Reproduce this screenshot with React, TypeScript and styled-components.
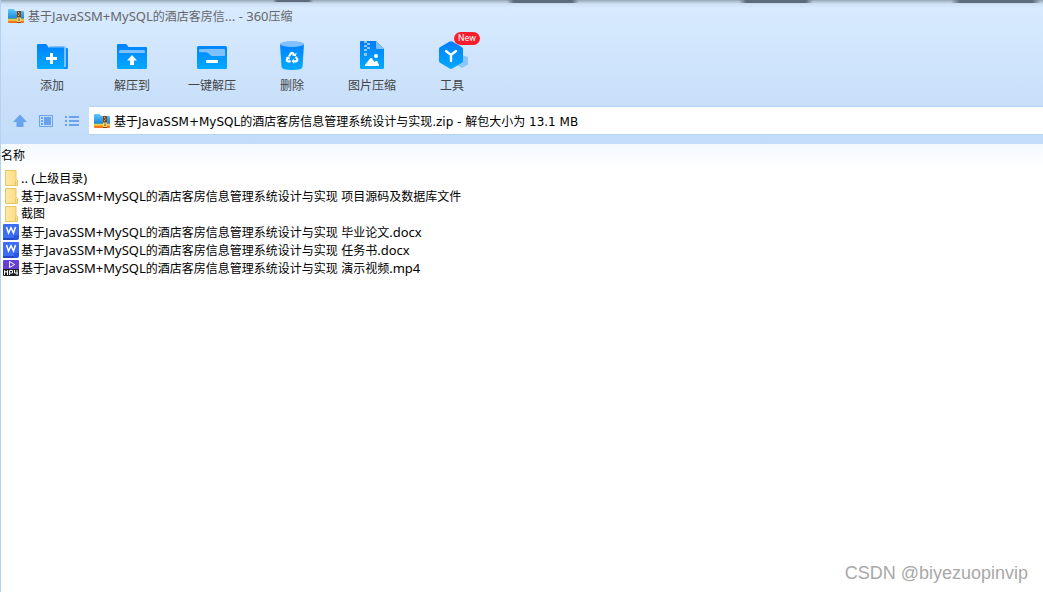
import React from "react";
import styled, { createGlobalStyle } from "styled-components";

const GlobalStyle = createGlobalStyle`
  * { box-sizing: border-box; }
  body {
    margin: 0;
    background: #fff;
    color: #000;
    font: 12px/18px "Noto Sans", "Noto Sans CJK SC", sans-serif;
  }
  button, input { font: inherit; color: inherit; }
  button { border: 0; padding: 0; background: none; cursor: pointer; }
`;

const Window = styled.div`
  position: relative;
  min-height: 100vh;
  border-left: 1px solid #b5d2f3;
`;

const shadowPatch = "linear-gradient(90deg, transparent, #5c6c7e 10%, #5c6c7e 90%, transparent)";

const Header = styled.header`
  background:
    ${shadowPatch} 272px 0 / 40px 2px no-repeat,
    ${shadowPatch} 506px 0 / 72px 3px no-repeat,
    ${shadowPatch} 738px 0 / 74px 3px no-repeat,
    ${shadowPatch} 950px 0 / 90px 3px no-repeat,
    linear-gradient(#95a5b6 0, #b4c6d8 2px, #cde1f5 4px, transparent 8px),
    linear-gradient(#d7eaff 10px, #c9e0fa 100px, #c2dcf9 144px);
`;

const TitleBar = styled.div`
  display: flex;
  align-items: center;
  gap: 4px;
  height: 32px;
  padding-left: 7px;
`;

const Title = styled.h1`
  margin: 0;
  font-size: 12px;
  font-weight: 400;
  color: #666;
  white-space: pre;
`;

const Latin = styled.span`
  font-size: 13px;
`;

const Toolbar = styled.div`
  display: flex;
  padding: 8px 0 6px 11px;
`;

const Tool = styled.button`
  position: relative;
  display: flex;
  flex-direction: column;
  align-items: center;
  gap: 5px;
  width: 80px;
  color: #444;
`;

const Badge = styled.span`
  position: absolute;
  top: -8px;
  left: 42px;
  width: 26px;
  border-radius: 7px;
  background: #fa1e2d;
  color: #fff;
  font: 9px/13px Roboto, sans-serif;
`;

const AddressRow = styled.div`
  display: flex;
  align-items: center;
  padding: 5px 0 9px 6px;
`;

const NavButton = styled.button`
  display: grid;
  place-items: center;
  width: 26px;
  height: 28px;
`;

const Address = styled.label`
  display: flex;
  flex: 1;
  align-items: center;
  gap: 4px;
  height: 29px;
  margin-left: 4px;
  padding-left: 5px;
  background: #fff;
  border: solid #b5d3f3;
  border-width: 1px 0;
`;

const AddressInput = styled.input`
  flex: 1;
  min-width: 0;
  border: 0;
  padding: 2px 0 0;
  outline: 0;
  background: none;
  font-family: "DejaVu Sans", "Noto Sans CJK SC", sans-serif;
`;

const FileTable = styled.table`
  width: 100%;
  border-collapse: collapse;
`;

const HeadCell = styled.th`
  height: 25px;
  padding: 0 0 1px;
  background: linear-gradient(#f3f9ff, #fff);
  font-weight: 400;
  text-align: left;
`;

const FileCell = styled.td`
  padding: 0;
`;

const FileName = styled.div`
  display: flex;
  align-items: center;
  gap: 2px;
  height: 18px;
  padding-left: 2px;
  white-space: pre;
`;

const Watermark = styled.p`
  position: absolute;
  right: 15px;
  bottom: 8px;
  margin: 0;
  color: #a8a8a8;
  font: 18px/22px "Liberation Sans", sans-serif;
`;

/* Latin runs are set one size larger than the Chinese text beside them. */
const Mixed = ({ text }: { text: string }) => (
  <span>
    {text.split(/([\x20-\x7e]+)/).map((run, i) => (i % 2 ? <Latin key={i}>{run}</Latin> : run))}
  </span>
);

const ArchiveIcon = () => (
  <svg width="16" height="16" viewBox="0 0 16 16" aria-hidden="true">
    <defs>
      <linearGradient id="archive" x1="0" y1="0" x2="0" y2="1">
        <stop stopColor="#5cc8fa" />
        <stop offset="1" stopColor="#1a86e0" />
      </linearGradient>
    </defs>
    <path d="M0 2q0-1 1-1h4.500L7 3h8q1 0 1 1v7H0z" fill="url(#archive)" />
    <path d="M0 10.500h16v1H0z" fill="#7cc243" />
    <path d="M0 11.500h16V13H0z" fill="#ffb833" />
    <path d="M0 13h16v1q0 1-1 1H1q-1 0-1-1z" fill="#f2761c" />
    <path d="M9 3h4v12H9z" fill="#80441a" />
    <path d="M10 4h1v1h-1zm1 1.500h1v1h-1zM10 7h1v1h-1z" fill="#f2b44a" />
    <path d="M9 9.500h4V14H9z" fill="#ffd36b" />
    <path d="M10.500 10.500h1V13h-1z" fill="#7a3f10" />
  </svg>
);

const FolderIcon = () => (
  <svg width="16" height="16" viewBox="0 0 16 16" aria-hidden="true">
    <defs>
      <linearGradient id="folder">
        <stop stopColor="#ffe9a6" />
        <stop offset="1" stopColor="#fcdc82" />
      </linearGradient>
    </defs>
    <path d="M2.500.5h10.500v9l1.500 1v5h-12z" fill="url(#folder)" stroke="#e8c566" />
    <path d="M12.500 15.500v-5" stroke="#e8c566" />
  </svg>
);

const WordIcon = () => (
  <svg width="16" height="16" viewBox="0 0 16 16" aria-hidden="true">
    <path d="M1 0h14q1 0 1 1v10l-5 5H1q-1 0-1-1V1q0-1 1-1z" fill="#3b6ef5" />
    <path d="M0 14h12l-1.500 2H1q-1 0-1-1z" fill="#2348c2" />
    <path d="M11 16v-4q0-1 1-1h4v3q0 2-2 2z" fill="#2a55dd" />
    <path d="M3.500 3 5.500 9 8 3.800 10.500 9l2-6" fill="none" stroke="#fff" strokeWidth="1.500" />
  </svg>
);

const VideoIcon = () => (
  <svg width="16" height="16" viewBox="0 0 16 16" aria-hidden="true">
    <path d="M0 1q0-1 1-1h14q1 0 1 1v8H0z" fill="#6440d8" />
    <path d="M0 9h16v6q0 1-1 1H1q-1 0-1-1z" fill="#1f1f24" />
    <path d="M6.500 1.500v6L11.500 4.500z" fill="none" stroke="#fff" />
    <path
      d="M1.500 15v-4.500l1.500 2 1.500-2V15M6.500 15v-4.500h3v2.500h-3M11.500 10v3h3.500m-1-3v5"
      fill="none"
      stroke="#fff"
    />
  </svg>
);

const ToolIcon = ({ children }: { children: React.ReactNode }) => (
  <svg width="32" height="32" viewBox="0 0 32 32" aria-hidden="true">
    <defs>
      <linearGradient id="blue" x1="0" y1="2" x2="0" y2="29" gradientUnits="userSpaceOnUse">
        <stop stopColor="#007dff" />
        <stop offset="1" stopColor="#00aaff" />
      </linearGradient>
    </defs>
    {children}
  </svg>
);

const tools = [
  {
    label: "添加",
    icon: (
      <>
        <path d="M26 8h5q1 0 1 1v18.500q0 1.500-1.500 1.500H26z" fill="#0a8cff" />
        <path d="M13 6h15q2 0 2 2v19h-2V8H14z" fill="#7fc0ff" />
        <path d="M1 5q0-1 1-1h7.500q1 0 1.500 1l1.500 2.500H28V29H2.500Q1 29 1 27.500z" fill="url(#blue)" />
        <path d="M14 13h3v4h4v3h-4v4h-3v-4h-4v-3h4z" fill="#fff" />
      </>
    ),
  },
  {
    label: "解压到",
    icon: (
      <>
        <path
          d="M1 5q0-1 1-1h7.500q1 0 1.500 1l1.500 2H30q1 0 1 1v19.500q0 1.500-1.500 1.500h-27Q1 29 1 27.500z"
          fill="url(#blue)"
        />
        <path d="M3 11.500Q3 10 4.500 10h23q1.500 0 1.500 1.500V13H3z" fill="#7fc0ff" />
        <path d="m16 15 5 5.500h-3V25h-4v-4.500h-3z" fill="#fff" />
      </>
    ),
  },
  {
    label: "一键解压",
    icon: (
      <>
        <rect x="1" y="6" width="30" height="23" rx="1.500" fill="url(#blue)" />
        <path d="M3 10q0-1 1-1h24q1 0 1 1v6H16q-1 0-2-1l-2-2q-.8-.8-2-.8H3z" fill="#7fc0ff" />
        <rect x="10" y="20" width="12" height="3" rx="1" fill="#fff" />
      </>
    ),
  },
  {
    label: "删除",
    icon: (
      <>
        <path d="M4 4h24l-1.500 23q-.2 3-10.500 3T5.500 27z" fill="url(#blue)" />
        <ellipse cx="16" cy="4" rx="12" ry="3" fill="#7fc0ff" />
        <g fill="none" stroke="#fff" strokeWidth="2.200">
          <path d="m13.200 16.300 1.700-2.800q1.100-1.400 2.200 0l.8 1.400" />
          <path d="m19.800 16.800 1.400 2.500q.7 1.900-1.300 2.100h-2.700" />
          <path d="M14.700 21.400h-2.500q-2-.2-1.300-2.100l.9-1.500" />
        </g>
        <path d="m16 15.500 3.700.8 1-3.500zM18 18.500v5.300l-2.500-2.500zM9.700 17.200l3.600-.9.600 3.600z" fill="#fff" />
      </>
    ),
  },
  {
    label: "图片压缩",
    icon: (
      <>
        <path d="M4 2q0-1 1-1h15l8 8v18.500q0 1.500-1.500 1.500h-21Q4 29 4 27.500z" fill="url(#blue)" />
        <path d="M20 1l8 8h-7q-1 0-1-1z" fill="#7fc0ff" />
        <path d="M8 1h3v2H8zm3 2h3v2h-3zM8 5h3v2H8zm3 2h3v2h-3zM8 9h3v2H8zm0 4h3v3H8z" fill="#8cc6ff" />
        <circle cx="20" cy="16" r="2" fill="#fff" />
        <path d="M9 26v-1l5-6.500q1-1 2 0l2.500 3.500 1.300-1q.8-.5 1.500.3L23 25v1z" fill="#fff" />
      </>
    ),
  },
  {
    label: "工具",
    badge: "New",
    icon: (
      <>
        <path d="m25 15 7 2v7.500L26 28l-5-3z" fill="#8cc4fb" />
        <path
          d="M13.700 1.600q1.300-.8 2.600 0l9.700 5.600q1 .6 1 1.800v12q0 1.200-1 1.800l-9.700 5.600q-1.300.8-2.600 0L4 22.800q-1-.6-1-1.800V9q0-1.200 1-1.800z"
          fill="url(#blue)"
        />
        <path d="m10 11 5 4 5-4m-5 4v6" fill="none" stroke="#fff" strokeWidth="2.400" strokeLinecap="round" />
      </>
    ),
  },
];

const navButtons = [
  { label: "向上", icon: <path d="m7 .5 7 7.500h-3.500v5h-7V8H0z" fill="#69a2ee" /> },
  {
    label: "预览",
    icon: (
      <>
        <path d="M.5 1.500h13v11H.5z" fill="none" stroke="#69a2ee" />
        <path d="M2 3h2v2H2zm0 3h2v2H2zm0 3h2v2H2zM5 3h7v8H5z" fill="#69a2ee" />
      </>
    ),
  },
  {
    label: "列表",
    icon: <path d="M0 2h2v2H0zm4 0h10v2H4zM0 6h2v2H0zm4 0h10v2H4zM0 10h2v2H0zm4 0h10v2H4z" fill="#69a2ee" />,
  },
];

const project = "基于JavaSSM+MySQL的酒店客房信息管理系统设计与实现";

const files = [
  { name: ".. (上级目录)", Icon: FolderIcon },
  { name: `${project} 项目源码及数据库文件`, Icon: FolderIcon },
  { name: "截图", Icon: FolderIcon },
  { name: `${project} 毕业论文.docx`, Icon: WordIcon },
  { name: `${project} 任务书.docx`, Icon: WordIcon },
  { name: `${project} 演示视频.mp4`, Icon: VideoIcon },
];

export default function App() {
  return (
    <Window>
      <GlobalStyle />
      <Header>
        <TitleBar>
          <ArchiveIcon />
          <Title>
            <Mixed text="基于JavaSSM+MySQL的酒店客房信... - 360压缩" />
          </Title>
        </TitleBar>
        <Toolbar>
          {tools.map(({ label, icon, badge }) => (
            <Tool key={label} type="button">
              <ToolIcon>{icon}</ToolIcon>
              {label}
              {badge && <Badge>{badge}</Badge>}
            </Tool>
          ))}
        </Toolbar>
        <AddressRow>
          {navButtons.map(({ label, icon }) => (
            <NavButton key={label} type="button" aria-label={label}>
              <svg width="14" height="14" viewBox="0 0 14 14" aria-hidden="true">
                {icon}
              </svg>
            </NavButton>
          ))}
          <Address>
            <ArchiveIcon />
            <AddressInput aria-label="路径" readOnly value={`${project}.zip - 解包大小为 13.1 MB`} />
          </Address>
        </AddressRow>
      </Header>
      <FileTable>
        <thead>
          <tr>
            <HeadCell scope="col">名称</HeadCell>
          </tr>
        </thead>
        <tbody>
          {files.map(({ name, Icon }) => (
            <tr key={name}>
              <FileCell>
                <FileName>
                  <Icon />
                  <Mixed text={name} />
                </FileName>
              </FileCell>
            </tr>
          ))}
        </tbody>
      </FileTable>
      <Watermark>CSDN @biyezuopinvip</Watermark>
    </Window>
  );
}
